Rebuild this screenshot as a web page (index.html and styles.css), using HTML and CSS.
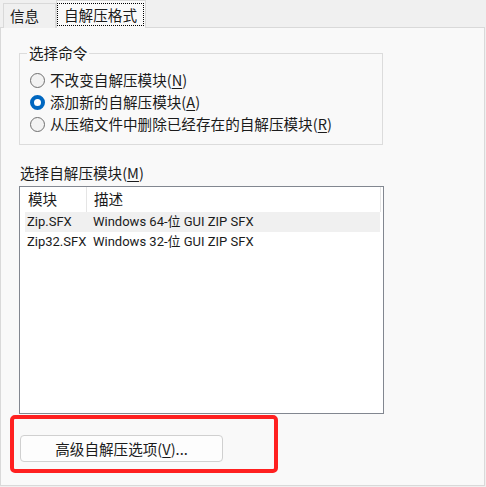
FILE: index.html
```html
<!DOCTYPE html>
<html lang="zh-CN">
<head>
<meta charset="utf-8">
<link rel="stylesheet" href="styles.css">
</head>
<body>
<div class="tabs">
  <div class="tab">信息</div>
  <div class="tab active"><span class="focus">自解压格式</span></div>
</div>
<div class="panel">
  <fieldset class="group">
    <legend>选择命令</legend>
    <div class="radio"><span class="circle"></span><span>不改变自解压模块(<u>N</u>)</span></div>
    <div class="radio"><span class="circle on"></span><span>添加新的自解压模块(<u>A</u>)</span></div>
    <div class="radio"><span class="circle"></span><span>从压缩文件中删除已经存在的自解压模块(<u>R</u>)</span></div>
  </fieldset>
  <div class="label">选择自解压模块(<u>M</u>)</div>
  <div class="listbox">
    <div class="lhead"><div class="h1">模块</div><div class="h2">描述</div></div>
    <div class="lrow sel"><div class="c1">Zip.SFX</div><div class="c2">Windows 64-位 GUI ZIP SFX</div></div>
    <div class="lrow"><div class="c1">Zip32.SFX</div><div class="c2">Windows 32-位 GUI ZIP SFX</div></div>
  </div>
  <div class="redbox"><button class="btn">高级自解压选项(<u>V</u>)...</button></div>
</div>
</body>
</html>
```
FILE: styles.css
```css
* { box-sizing: border-box; }
html, body { margin: 0; padding: 0; }
body {
  background: #f0f0f0;
  width: 486px;
  height: 487px;
  overflow: hidden;
  font-family: "Noto Sans CJK SC", sans-serif;
  font-size: 14.6px;
  line-height: 20px;
  color: #1b1b1b;
}
u { text-decoration-thickness: 1px; text-underline-offset: 2px; }
.tabs {
  display: flex;
  align-items: flex-end;
  height: 28px;
  padding-left: 3px;
  position: relative;
  z-index: 1;
}
.tab {
  height: 25px;
  width: 53px;
  border: 1px solid #d9d9d9;
  border-bottom: none;
  background: #f0f0f0;
  padding: 2px 0 0 6px;
}
.tab.active {
  height: 28px;
  width: 90px;
  background: #f9f9f9;
  padding: 2px 1px 0 0;
}
.focus {
  display: block;
  width: 87px;
  height: 23px;
  border: 1px dotted #000;
  padding: 1px 0 0 6px;
}
.panel {
  margin-top: -1px;
  width: 485px;
  height: 459px;
  border: 1px solid #d9d9d9;
  background: #f9f9f9;
}
.group {
  margin: 15px 0 0 18px;
  width: 364px;
  border: 1px solid #dcdcdc;
  padding: 6px 0 9px 10px;
}
.group legend {
  padding: 0 2px;
  margin-left: -3px;
  line-height: 20px;
}
.radio {
  display: flex;
  align-items: center;
  height: 22px;
  gap: 5px;
}
.circle {
  width: 15px;
  height: 15px;
  border-radius: 50%;
  border: 1px solid #6f6f6f;
  background: #f2f2f2;
  flex: none;
}
.circle.on {
  border: 4.5px solid #0067c0;
  background: #fff;
}
.label {
  margin: 18px 0 0 19px;
}
.listbox {
  margin: 3px 0 0 18px;
  width: 365px;
  height: 228px;
  border: 1px solid #828790;
  background: #fff;
}
.lhead {
  display: flex;
  height: 25px;
  width: 361px;
  align-items: center;
}
.h1 {
  width: 67px;
  height: 25px;
  padding: 2px 0 0 8px;
  border-right: 1px solid #e5e5e5;
}
.h2 {
  flex: 1;
  height: 25px;
  padding: 2px 0 0 7px;
  border-right: 1px solid #e5e5e5;
}
.lrow {
  display: flex;
  margin-left: 5px;
  width: 355px;
  height: 20px;
  align-items: center;
  font-family: Roboto, "Noto Sans CJK SC", sans-serif;
  font-size: 13px;
}
.lrow.sel { background: #f0f0f0; }
.c1 { width: 68px; padding-left: 2px; }
.c2 { flex: 1; }
.redbox {
  margin: 1px 0 0 9px;
  width: 268px;
  height: 58px;
  border: 4px solid #ff2020;
  border-radius: 5px;
  padding: 16px 0 0 6px;
}
.btn {
  display: block;
  width: 203px;
  height: 27px;
  border: 1px solid #d0d0d0;
  border-radius: 4px;
  background: #fdfdfd;
  font-family: inherit;
  font-size: 14.6px;
  color: #1b1b1b;
  padding: 0;
  line-height: 20px;
}
```
